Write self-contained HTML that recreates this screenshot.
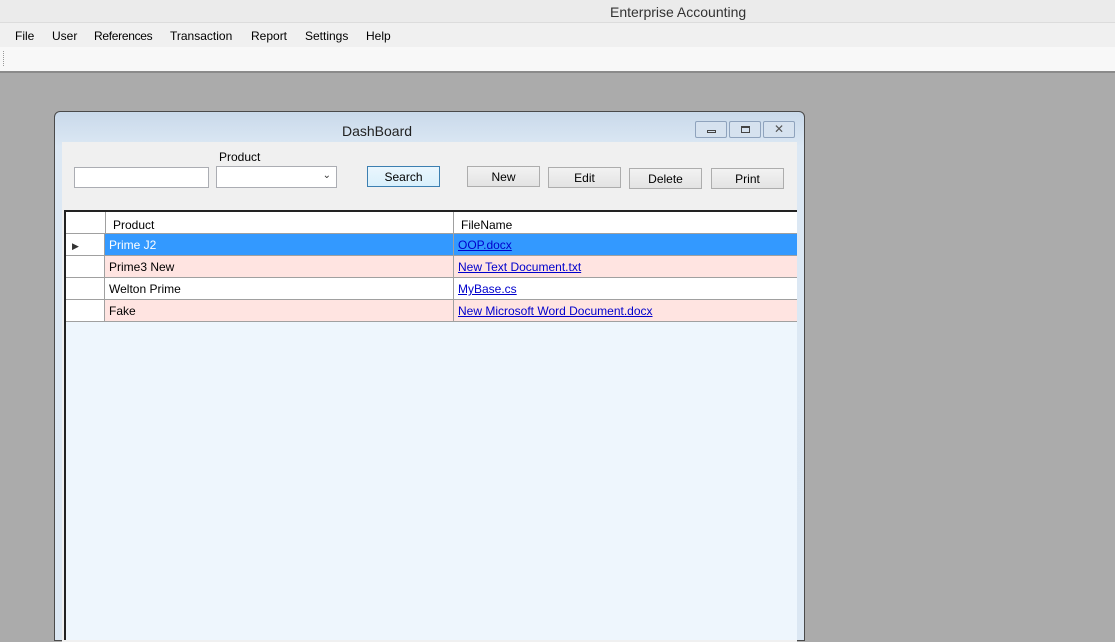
<!DOCTYPE html>
<html><head><style>
*{margin:0;padding:0;box-sizing:border-box}
body{width:1115px;height:633px;overflow:hidden;background:#ababab;font-family:"Liberation Sans",sans-serif;font-size:12px;color:#000;position:relative}
.a{position:absolute}
.btn{position:absolute;height:21px;border:1px solid #adadad;background:linear-gradient(#f2f2f2,#e3e3e3);text-align:center;line-height:21px;font-size:12px}
.row{position:absolute;left:66px;width:731px;height:22px;border-bottom:1px solid #a0a0a0}
.row div{position:absolute;top:0;height:21px;line-height:23px}
.c0{left:0;width:39px;background:#fff;border-right:1px solid #a0a0a0}
.c1{left:39px;width:349px;padding-left:4px;border-right:1px solid #a0a0a0}
.c2{left:388px;width:343px;padding-left:4px}
a{color:#00c;text-decoration:underline}
.m{top:29px}
</style></head><body>
<div class="a" style="left:0;top:0;width:1115px;height:23px;background:#ebebeb;border-bottom:1px solid #dcdcdc"></div>
<div class="a" style="left:610px;top:4px;font-size:14px;color:#333">Enterprise Accounting</div>
<div class="a" style="left:0;top:23px;width:1115px;height:24px;background:#f0f0f0"></div>
<div class="a m" style="left:15px">File</div>
<div class="a m" style="left:52px">User</div>
<div class="a m" style="left:94px;letter-spacing:-0.3px">References</div>
<div class="a m" style="left:170px">Transaction</div>
<div class="a m" style="left:251px">Report</div>
<div class="a m" style="left:305px">Settings</div>
<div class="a m" style="left:366px">Help</div>
<div class="a" style="left:0;top:47px;width:1115px;height:26px;background:#f8f8f8;border-bottom:2px solid #8a8a8a"></div>
<div class="a" style="left:3px;top:51px;height:15px;border-left:1px dotted #999"></div>
<div class="a" style="left:54px;top:111px;width:751px;height:530px;border:1px solid #4a4a4a;border-radius:6px 6px 0 0;background:linear-gradient(#c9d9ea,#dce8f4 35px,#dbe7f3)"></div>
<div class="a" style="left:342px;top:123px;font-size:14px;color:#222">DashBoard</div>
<div class="a" style="left:695px;top:121px;width:32px;height:17px;border:1px solid #8fa3bd;border-radius:2px;background:#d6e2ef"><div class="a" style="left:11px;top:8px;width:9px;height:3px;border:1px solid #444"></div></div>
<div class="a" style="left:729px;top:121px;width:32px;height:17px;border:1px solid #8fa3bd;border-radius:2px;background:#d6e2ef"><div class="a" style="left:11px;top:4px;width:9px;height:7px;border:1px solid #444;border-top-width:2px"></div></div>
<div class="a" style="left:763px;top:121px;width:32px;height:17px;border:1px solid #8fa3bd;border-radius:2px;background:#d6e2ef;text-align:center;line-height:14px;font-size:12px;color:#555">✕</div>
<div class="a" style="left:62px;top:142px;width:735px;height:500px;background:#f0f0f0"></div>
<div class="a" style="left:219px;top:150px">Product</div>
<div class="a" style="left:74px;top:167px;width:135px;height:21px;background:#fff;border:1px solid #abadb3"></div>
<div class="a" style="left:216px;top:166px;width:121px;height:22px;background:#fff;border:1px solid #abadb3"><span class="a" style="right:5px;top:3px;font-size:10px;color:#333">&#8964;</span></div>
<div class="btn" style="left:367px;top:166px;width:73px;border-color:#3c7fb1;background:linear-gradient(#eaf6fd,#d9f0fc)">Search</div>
<div class="btn" style="left:467px;top:166px;width:73px">New</div>
<div class="btn" style="left:548px;top:167px;width:73px">Edit</div>
<div class="btn" style="left:629px;top:168px;width:73px">Delete</div>
<div class="btn" style="left:711px;top:168px;width:73px">Print</div>
<div class="a" style="left:64px;top:210px;width:733px;height:430px;background:#eef6fd;border-left:2px solid #222;border-top:2px solid #222"></div>
<div class="a" style="left:66px;top:212px;width:731px;height:22px;background:#fff;border-bottom:1px solid #a0a0a0"></div>
<div class="a" style="left:105px;top:212px;height:22px;border-left:1px solid #a0a0a0"></div>
<div class="a" style="left:453px;top:212px;height:22px;border-left:1px solid #a0a0a0"></div>
<div class="a" style="left:113px;top:218px">Product</div>
<div class="a" style="left:461px;top:218px">FileName</div>
<div class="row" style="top:234px"><div class="c0"><span class="a" style="left:6px;top:1px;font-size:9px;color:#333">&#9654;</span></div><div class="c1" style="background:#3399ff;color:#fff">Prime J2</div><div class="c2" style="background:#3399ff"><a style="color:#00c">OOP.docx</a></div></div>
<div class="row" style="top:256px"><div class="c0"></div><div class="c1" style="background:#ffe4e1">Prime3 New</div><div class="c2" style="background:#ffe4e1"><a>New Text Document.txt</a></div></div>
<div class="row" style="top:278px"><div class="c0"></div><div class="c1" style="background:#fff">Welton Prime</div><div class="c2" style="background:#fff"><a>MyBase.cs</a></div></div>
<div class="row" style="top:300px"><div class="c0"></div><div class="c1" style="background:#ffe4e1">Fake</div><div class="c2" style="background:#ffe4e1"><a>New Microsoft Word Document.docx</a></div></div>
</body></html>
